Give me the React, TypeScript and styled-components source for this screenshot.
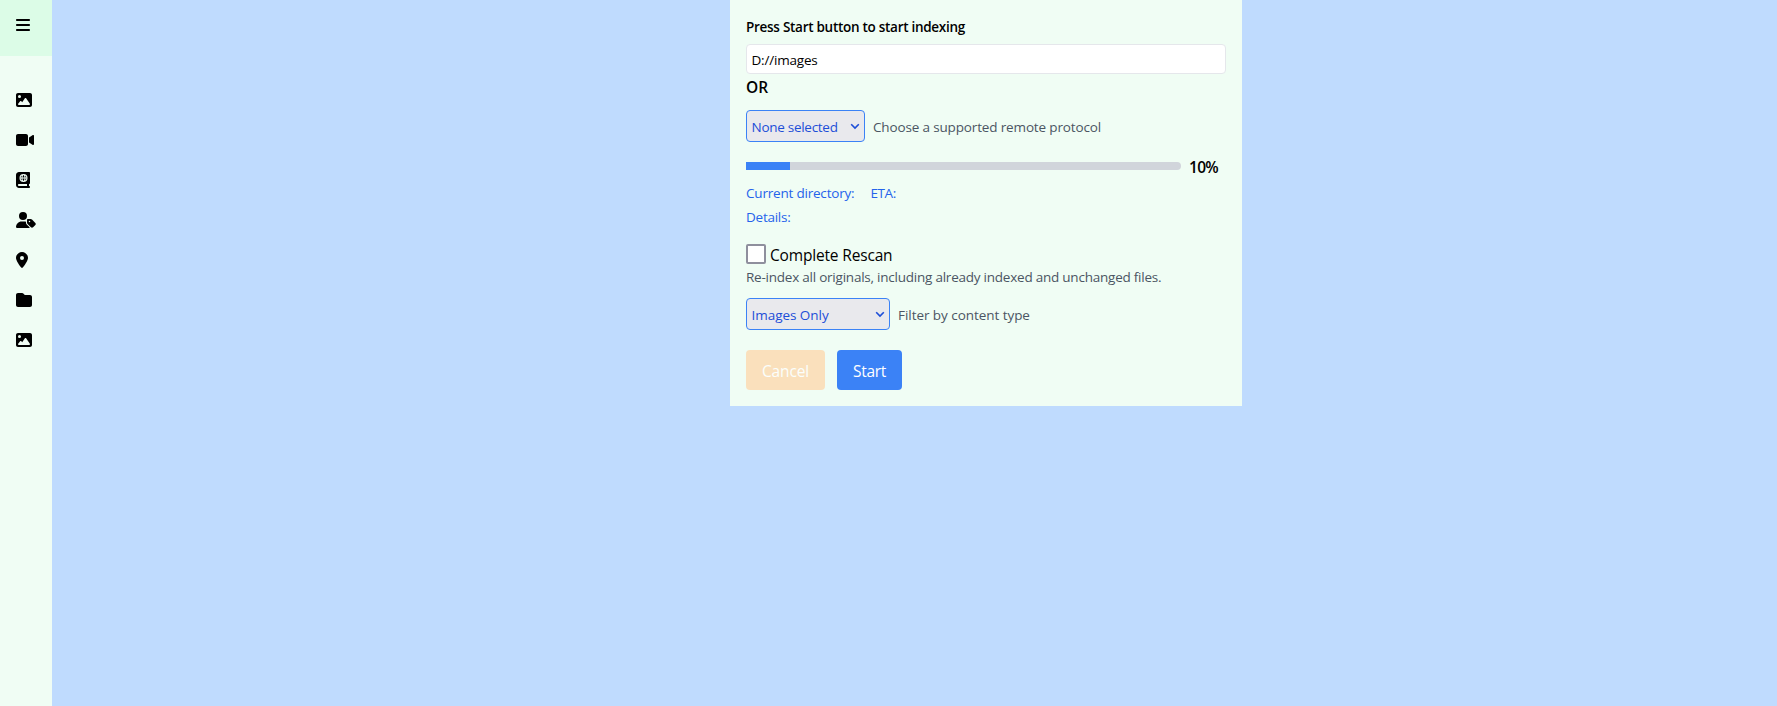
import React, { useState } from 'react';
import styled, { createGlobalStyle } from 'styled-components';
import { FaBars, FaImage, FaVideo, FaBookAtlas, FaUserTag, FaLocationDot, FaFolder } from 'react-icons/fa6';

const GlobalStyle = createGlobalStyle`
  *, *::before, *::after { box-sizing: border-box; }
  body {
    margin: 0;
    font-family: "Segoe UI", "Open Sans", "Noto Sans", sans-serif;
    font-size: 15.5px;
    line-height: 24px;
    color: #000;
  }
`;

const Page = styled.div`
  display: flex;
  height: 100vh;
  overflow: hidden;
  background: #bfdbfe;
`;

const Sidebar = styled.aside`
  width: 52px;
  flex: none;
  background: #f0fdf4;
`;

const IconButton = styled.button<{ $glyph: number }>`
  display: flex;
  align-items: center;
  width: 100%;
  height: 40px;
  padding: 0 0 0 16px;
  border: 0;
  background: transparent;
  color: #000;
  svg {
    display: block;
    flex: none;
    width: ${p => p.$glyph}px;
    height: 16px;
  }
`;

const MenuHeader = styled.div`
  height: 56px;
  padding-top: 5px;
  background: #dcfce7;
`;

const Nav = styled.nav`
  padding-top: 24px;
`;

const Main = styled.main`
  flex: 1;
  display: flex;
  align-items: flex-start;
  padding-left: 678px;
`;

const Panel = styled.section`
  width: 512px;
  flex: none;
  padding: 16px;
  background: #f0fdf4;
`;

const Text = styled.div<{ $track?: number; $tone?: string; $bold?: boolean; $large?: boolean }>`
  padding-top: 2px;
  white-space: nowrap;
  font-size: ${p => (p.$large ? 15.5 : 13.5)}px;
  line-height: ${p => (p.$large ? 22 : 18)}px;
  font-weight: ${p => (p.$bold ? 600 : 400)};
  letter-spacing: ${p => p.$track ?? 0}px;
  color: ${p => p.$tone ?? '#000'};
`;

const PathInput = styled.input`
  display: block;
  width: 480px;
  height: 30px;
  margin-top: 8px;
  padding: 2px 4.5px 0;
  border: 1px solid #e5e7eb;
  border-radius: 4px;
  background: #fff;
  font: inherit;
  font-size: 13.5px;
  letter-spacing: -0.2px;
  color: #000;
`;

const Field = styled.div`
  display: flex;
  align-items: center;
  gap: 8px;
  height: 32px;
  margin-top: 12px;
`;

const SelectBox = styled.div<{ $width: number }>`
  position: relative;
  width: ${p => p.$width}px;
  height: 32px;
  svg {
    position: absolute;
    right: 5px;
    top: 13px;
    pointer-events: none;
  }
`;

const Select = styled.select<{ $track: number }>`
  appearance: none;
  display: block;
  width: 100%;
  height: 32px;
  padding: 1px 4.5px 0;
  border: 1px solid #3b82f6;
  border-radius: 4px;
  background: #e9e9ed;
  font: inherit;
  font-size: 13.5px;
  letter-spacing: ${p => p.$track}px;
  color: #1d4ed8;
`;

const ProgressRow = styled.div`
  display: flex;
  align-items: center;
  gap: 8px;
  height: 24px;
  margin-top: 12px;
`;

const Track = styled.div`
  width: 435px;
  height: 8px;
  overflow: hidden;
  border-radius: 0 4px 4px 0;
  background: #d1d5db;
`;

const Fill = styled.div`
  height: 100%;
  background: #3b82f6;
`;

const StatusRow = styled.div`
  display: flex;
  gap: 16px;
  margin-top: 4px;
`;

const CheckRow = styled.label`
  display: flex;
  align-items: center;
  gap: 4px;
  height: 24px;
  margin-top: 16px;
`;

const Checkbox = styled.input`
  appearance: none;
  width: 20px;
  height: 20px;
  margin: 0;
  border: 2px solid #8f8f9d;
  border-radius: 2px;
  background: #fff;
`;

const Actions = styled.div`
  display: flex;
  gap: 12px;
  margin-top: 20px;
`;

const Button = styled.button<{ $width: number; $bg: string; $track: number }>`
  width: ${p => p.$width}px;
  height: 40px;
  padding: 1px 0 0;
  border: 0;
  border-radius: 4px;
  background: ${p => p.$bg};
  font: inherit;
  letter-spacing: ${p => p.$track}px;
  color: #fff;
  &:disabled { opacity: 0.75; }
`;

const navItems = [
  { label: 'Images', Icon: FaImage, glyph: 16 },
  { label: 'Videos', Icon: FaVideo, glyph: 18 },
  { label: 'Atlas', Icon: FaBookAtlas, glyph: 14 },
  { label: 'People', Icon: FaUserTag, glyph: 20 },
  { label: 'Places', Icon: FaLocationDot, glyph: 12 },
  { label: 'Folders', Icon: FaFolder, glyph: 16 },
  { label: 'Gallery', Icon: FaImage, glyph: 16 },
];

const Chevron = () => (
  <svg width="10" height="7" viewBox="0 0 10 7" fill="none" stroke="#1d4ed8" strokeWidth="1.6">
    <path d="M1.2 1.2 5 5 8.8 1.2" />
  </svg>
);

export default function App() {
  const [progress] = useState(10);
  return (
    <Page>
      <GlobalStyle />
      <Sidebar>
        <MenuHeader>
          <IconButton $glyph={14} aria-label="Menu"><FaBars /></IconButton>
        </MenuHeader>
        <Nav>
          {navItems.map(({ label, Icon, glyph }) => (
            <IconButton key={label} $glyph={glyph} aria-label={label}><Icon /></IconButton>
          ))}
        </Nav>
      </Sidebar>
      <Main>
        <Panel>
          <Text $bold $track={-0.28}>Press Start button to start indexing</Text>
          <PathInput defaultValue="D://images" />
          <Text $bold $large $track={0.1}>OR</Text>
          <Field>
            <SelectBox $width={119}>
              <Select $track={-0.28}><option>None selected</option></Select>
              <Chevron />
            </SelectBox>
            <Text $tone="#4b5563" $track={-0.15}>Choose a supported remote protocol</Text>
          </Field>
          <ProgressRow>
            <Track><Fill style={{ width: Math.round(progress * 4.36) }} /></Track>
            <Text $bold $large $track={-0.7}>{progress}%</Text>
          </ProgressRow>
          <StatusRow>
            <Text $tone="#2563eb" $track={-0.2}>Current directory:</Text>
            <Text $tone="#2563eb" $track={-0.4}>ETA:</Text>
          </StatusRow>
          <StatusRow>
            <Text $tone="#2563eb" $track={-0.25}>Details:</Text>
          </StatusRow>
          <CheckRow>
            <Checkbox type="checkbox" />
            <Text $large $track={-0.17}>Complete Rescan</Text>
          </CheckRow>
          <Text $tone="#4b5563" $track={-0.23}>Re-index all originals, including already indexed and unchanged files.</Text>
          <Field>
            <SelectBox $width={144}>
              <Select $track={-0.04}><option>Images Only</option></Select>
              <Chevron />
            </SelectBox>
            <Text $tone="#4b5563" $track={-0.05}>Filter by content type</Text>
          </Field>
          <Actions>
            <Button $width={79} $bg="#fed7aa" $track={-0.15} disabled>Cancel</Button>
            <Button $width={65} $bg="#3b82f6" $track={-0.3}>Start</Button>
          </Actions>
        </Panel>
      </Main>
    </Page>
  );
}
